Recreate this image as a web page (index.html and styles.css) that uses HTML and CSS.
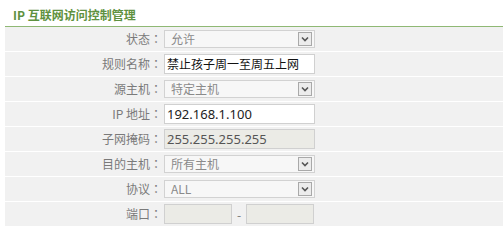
FILE: index.html
```html
<!DOCTYPE html>
<html lang="zh-CN">
<head>
<meta charset="utf-8">
<title>IP 互联网访问控制管理</title>
<link rel="stylesheet" href="styles.css">
</head>
<body>
<div class="page">
  <div class="title">IP 互联网访问控制管理</div>
  <div class="form">
    <div class="row">
      <div class="label">状态<span class="colon" lang="zh-TW">：</span></div>
      <div class="field">
        <div class="select"><span class="sel-text">允许</span><span class="arrow"><svg width="8" height="6" viewBox="0 0 8 6"><path d="M1 1.5 L4 4.5 L7 1.5" fill="none" stroke="#555" stroke-width="1.6"/></svg></span></div>
      </div>
    </div>
    <div class="row">
      <div class="label">规则名称<span class="colon" lang="zh-TW">：</span></div>
      <div class="field"><div class="input">禁止孩子周一至周五上网</div></div>
    </div>
    <div class="row">
      <div class="label">源主机<span class="colon" lang="zh-TW">：</span></div>
      <div class="field">
        <div class="select"><span class="sel-text">特定主机</span><span class="arrow"><svg width="8" height="6" viewBox="0 0 8 6"><path d="M1 1.5 L4 4.5 L7 1.5" fill="none" stroke="#555" stroke-width="1.6"/></svg></span></div>
      </div>
    </div>
    <div class="row">
      <div class="label">IP 地址<span class="colon" lang="zh-TW">：</span></div>
      <div class="field"><div class="input num">192.168.1.100</div></div>
    </div>
    <div class="row">
      <div class="label">子网掩码<span class="colon" lang="zh-TW">：</span></div>
      <div class="field"><div class="input num disabled">255.255.255.255</div></div>
    </div>
    <div class="row">
      <div class="label">目的主机<span class="colon" lang="zh-TW">：</span></div>
      <div class="field">
        <div class="select"><span class="sel-text">所有主机</span><span class="arrow"><svg width="8" height="6" viewBox="0 0 8 6"><path d="M1 1.5 L4 4.5 L7 1.5" fill="none" stroke="#555" stroke-width="1.6"/></svg></span></div>
      </div>
    </div>
    <div class="row">
      <div class="label">协议<span class="colon" lang="zh-TW">：</span></div>
      <div class="field">
        <div class="select"><span class="sel-text">ALL</span><span class="arrow"><svg width="8" height="6" viewBox="0 0 8 6"><path d="M1 1.5 L4 4.5 L7 1.5" fill="none" stroke="#555" stroke-width="1.6"/></svg></span></div>
      </div>
    </div>
    <div class="row">
      <div class="label">端口<span class="colon" lang="zh-TW">：</span></div>
      <div class="field port">
        <div class="input small disabled"></div>
        <span class="dash">-</span>
        <div class="input small disabled"></div>
      </div>
    </div>
  </div>
</div>
</body>
</html>
```
FILE: styles.css
```css
html, body {
  margin: 0;
  padding: 0;
  background: #ffffff;
  overflow: hidden;
}
.page {
  padding-left: 5px;
  font-family: "Noto Sans CJK SC", "Noto Sans", sans-serif;
  font-size: 12px;
}
.title {
  height: 26px;
  line-height: 30px;
  padding-left: 8px;
  color: #5e9140;
  font-weight: bold;
  font-size: 12px;
  box-sizing: border-box;
}
.form {
  border-top: 1px solid #8fb874;
}
.row {
  display: flex;
  align-items: center;
  height: 24px;
  background: #f1f1f1;
  border-bottom: 1px solid #ffffff;
}
.label {
  width: 157px;
  text-align: right;
  color: #7a7a7a;
  font-size: 12px;
  line-height: 24px;
  flex: none;
}
.colon {
  font-family: "Noto Sans CJK TC", "Noto Sans CJK SC", sans-serif;
}
.field {
  display: flex;
  align-items: center;
  padding-left: 2px;
}
.select {
  width: 151px;
  height: 18px;
  box-sizing: border-box;
  border: 1px solid #d2d2d2;
  background: #f7f7f7;
  display: flex;
  align-items: center;
  justify-content: space-between;
  padding: 0 2px 0 6px;
}
.sel-text {
  color: #8a8a8a;
  font-size: 12px;
  line-height: 16px;
}
.arrow {
  width: 14px;
  height: 14px;
  box-sizing: border-box;
  border: 1px solid #a9a9a9;
  background: #ececec;
  display: flex;
  align-items: center;
  justify-content: center;
}
.input {
  width: 151px;
  height: 20px;
  box-sizing: border-box;
  border: 1px solid #d0d0d0;
  background: #ffffff;
  color: #111;
  font-size: 12px;
  line-height: 18px;
  padding-left: 2px;
  white-space: nowrap;
  overflow: hidden;
}
.input.num {
  font-family: "Noto Sans", sans-serif;
  font-size: 13px;
  color: #222;
}
.input.disabled {
  background: #ebebe6;
  color: #555;
}
.input.small {
  width: 68px;
}
.port .dash {
  width: 14px;
  text-align: center;
  color: #777;
  font-size: 12px;
}
```
